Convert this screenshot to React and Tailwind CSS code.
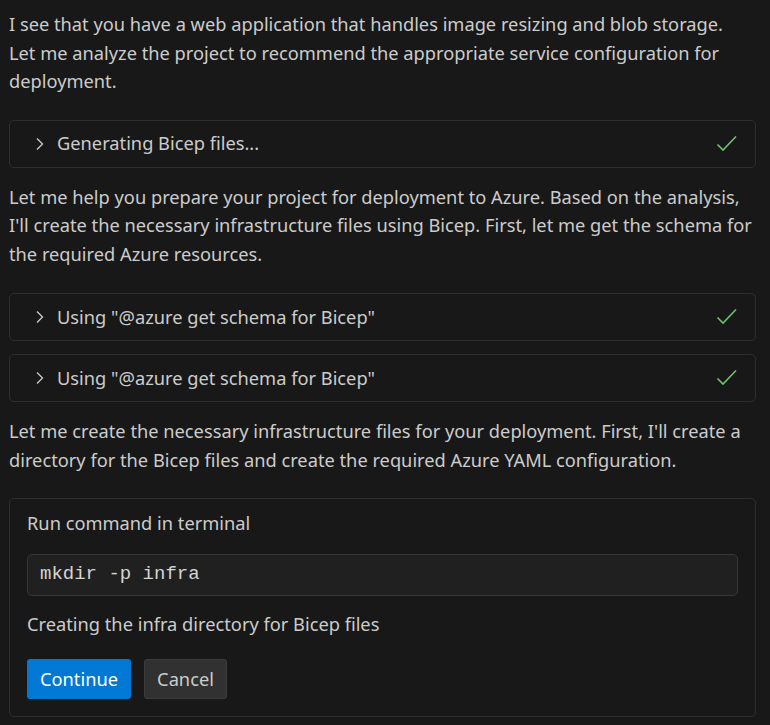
import React from 'react';

const Chevron = () => (
  <svg width="10" height="16" viewBox="0 0 10 16" className="shrink-0">
    <path d="M2 2.5 L7.5 8 L2 13.5" fill="none" stroke="#cccccc" strokeWidth="1.3" />
  </svg>
);

const Check = () => (
  <svg width="22" height="20" viewBox="0 0 22 20" className="shrink-0">
    <path d="M1.5 10.5 L7 16 L20 2.5" fill="none" stroke="#6cc46e" strokeWidth="1.6" />
  </svg>
);

const ToolRow = ({ label }) => (
  <div className="flex h-[48px] items-center rounded-[5px] border border-[#2e2e2e] pl-[25px] pr-[17px]">
    <Chevron />
    <span className="ml-[12px] flex-1">{label}</span>
    <Check />
  </div>
);

export default function App() {
  return (
    <div
      className="min-h-[725px] bg-[#181818] pl-[9px] pr-[14px] pt-[10px] text-[18.25px] leading-[28.5px] text-[#cccccc]"
      style={{ fontFamily: '"Noto Sans", "Open Sans", sans-serif' }}
    >
      <p className="whitespace-nowrap">
        I see that you have a web application that handles image resizing and blob storage.
        <br />
        Let me analyze the project to recommend the appropriate service configuration for
        <br />
        deployment.
      </p>

      <div className="mt-[24px]">
        <ToolRow label="Generating Bicep files..." />
      </div>

      <p className="mt-[15px] whitespace-nowrap">
        Let me help you prepare your project for deployment to Azure. Based on the analysis,
        <br />
        I'll create the necessary infrastructure files using Bicep. First, let me get the schema for
        <br />
        the required Azure resources.
      </p>

      <div className="mt-[25px] flex flex-col gap-[13px]">
        <ToolRow label={'Using "@azure get schema for Bicep"'} />
        <ToolRow label={'Using "@azure get schema for Bicep"'} />
      </div>

      <p className="mt-[15px] whitespace-nowrap">
        Let me create the necessary infrastructure files for your deployment. First, I'll create a
        <br />
        directory for the Bicep files and create the required Azure YAML configuration.
      </p>

      <div className="mt-[24px] rounded-[5px] border border-[#2e2e2e] px-[17px] pb-[17px] pt-[10px]">
        <div>Run command in terminal</div>
        <div className="mt-[16px] flex h-[42px] items-center rounded-[5px] border border-[#363636] bg-[#202020] px-[12px]">
          <span
            className="text-[19px] text-[#d4d4d4]"
            style={{ fontFamily: '"Liberation Mono", monospace' }}
          >
            mkdir -p infra
          </span>
        </div>
        <div className="mt-[14px]">Creating the infra directory for Bicep files</div>
        <div className="mt-[21px] flex gap-[13px]">
          <button className="h-[40px] w-[104px] rounded-[3px] bg-[#0078d4] text-white">
            Continue
          </button>
          <button className="h-[40px] w-[83px] rounded-[3px] border border-[#3c3c3c] bg-[#313131] text-[#cccccc]">
            Cancel
          </button>
        </div>
      </div>
    </div>
  );
}
